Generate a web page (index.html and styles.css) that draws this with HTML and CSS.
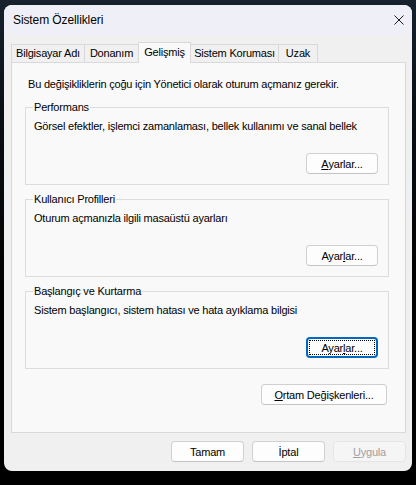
FILE: index.html
```html
<!DOCTYPE html>
<html lang="tr">
<head>
    <meta charset="UTF-8">
    <meta name="viewport" content="width=device-width, initial-scale=1.0">
    <title>Sistem Özellikleri</title>
    <link rel="stylesheet" href="styles.css">
</head>
<body>
    <div class="window">
        <div class="titlebar">
            <span class="title">Sistem Özellikleri</span>
            <svg class="close" width="10" height="10" viewBox="0 0 10 10">
                <path d="M0.5 0.5 L9.5 9.5 M9.5 0.5 L0.5 9.5" stroke="#1b1b1b" stroke-width="1" fill="none"/>
            </svg>
        </div>

        <div class="content">
            <div class="tabs">
                <div class="tab tab-name">Bilgisayar Adı</div>
                <div class="tab tab-hardware">Donanım</div>
                <div class="tab tab-advanced active">Gelişmiş</div>
                <div class="tab tab-protection">Sistem Koruması</div>
                <div class="tab tab-remote">Uzak</div>
            </div>

            <div class="panel">
                <p class="notice">Bu değişikliklerin çoğu için Yönetici olarak oturum açmanız gerekir.</p>

                <fieldset class="group">
                    <legend>Performans</legend>
                    <p class="desc">Görsel efektler, işlemci zamanlaması, bellek kullanımı ve sanal bellek</p>
                    <div class="group-actions">
                        <button class="btn"><u>A</u>yarlar...</button>
                    </div>
                </fieldset>

                <fieldset class="group">
                    <legend>Kullanıcı Profilleri</legend>
                    <p class="desc">Oturum açmanızla ilgili masaüstü ayarları</p>
                    <div class="group-actions">
                        <button class="btn">Ayar<u>l</u>ar...</button>
                    </div>
                </fieldset>

                <fieldset class="group last">
                    <legend>Başlangıç ve Kurtarma</legend>
                    <p class="desc">Sistem başlangıcı, sistem hatası ve hata ayıklama bilgisi</p>
                    <div class="group-actions">
                        <button class="btn focused"><span class="focus-ring">Ayar<u>l</u>ar...</span></button>
                    </div>
                </fieldset>

                <div class="panel-actions">
                    <button class="btn wide"><u>O</u>rtam Değişkenleri...</button>
                </div>
            </div>

            <div class="dialog-actions">
                <button class="btn">Tamam</button>
                <button class="btn">İptal</button>
                <button class="btn disabled"><u>U</u>ygula</button>
            </div>
        </div>
    </div>
</body>
</html>
```

FILE: styles.css
```css
* {
    margin: 0;
    padding: 0;
    box-sizing: border-box;
}

body {
    font-family: 'Liberation Sans', Arial, sans-serif;
    font-size: 11px;
    letter-spacing: -0.2px;
    line-height: 16px;
    color: #000;
    background: linear-gradient(180deg, #17222e 0%, #0b1118 20%, #000 60%);
    width: 416px;
    height: 485px;
    padding: 5px 4px 0 4px;
    overflow: hidden;
}

.window {
    width: 408px;
    height: 466px;
    background: #f0f0f0;
    border-radius: 8px;
    overflow: hidden;
    display: flex;
    flex-direction: column;
}

.titlebar {
    height: 30px;
    background: #eff0f7;
    display: flex;
    align-items: center;
    justify-content: space-between;
    padding: 0 8px 0 9px;
}

.title {
    font-size: 12px;
    letter-spacing: -0.1px;
}

.close {
    display: block;
}

.content {
    padding: 7px 6px 0 7px;
}

/* sekmeler */
.tabs {
    display: flex;
    align-items: flex-end;
    height: 20px;
    position: relative;
    z-index: 1;
}

.tab {
    height: 18px;
    line-height: 17px;
    text-align: center;
    white-space: nowrap;
    border: 1px solid #d9d9d9;
    border-bottom: none;
    border-left: none;
    background: #f0f0f0;
}

.tab:first-child {
    border-left: 1px solid #d9d9d9;
}

.tab-name { width: 74px; }
.tab-hardware { width: 54px; }
.tab-advanced { width: 53px; }
.tab-protection { width: 88px; }
.tab-remote { width: 39px; }

.tab.active {
    height: 21px;
    margin-bottom: -1px;
    margin-left: -1px;
    border-left: 1px solid #d9d9d9;
    background: #f9f9f9;
    line-height: 19px;
}

.panel {
    width: 395px;
    height: 371px;
    border: 1px solid #d9d9d9;
    background: #f9f9f9;
    padding: 13px 16px 0 13px;
}

.notice {
    padding-left: 3px;
    margin-bottom: 7px;
}

.group {
    min-width: 0;
    border: 1px solid #dcdcdc;
    padding: 3px 10px 10px 8px;
    margin-bottom: 6px;
}

.group.last {
    margin-bottom: 15px;
}

.group legend {
    padding: 0 1px;
    margin-left: -1px;
}

.desc {
    white-space: nowrap;
    margin-bottom: 19px;
}

.group-actions,
.panel-actions {
    display: flex;
    justify-content: flex-end;
}

.panel-actions {
    margin-right: 2px;
}

.btn {
    font-family: inherit;
    font-size: 11px;
    letter-spacing: -0.2px;
    color: #000;
    width: 72px;
    height: 21px;
    background: #fdfdfd;
    border: 1px solid #d0d0d0;
    border-bottom-color: #c4c4c4;
    border-radius: 4px;
    display: flex;
    align-items: center;
    justify-content: center;
}

.btn.wide {
    width: 126px;
}

.btn.focused {
    border: 2px solid #0067c0;
    padding: 1px;
}

.focus-ring {
    display: flex;
    align-items: center;
    justify-content: center;
    width: 100%;
    height: 100%;
    outline: 1px dotted #000;
    outline-offset: -1px;
}

.btn.disabled {
    color: #a0a0a0;
    background: #f5f5f5;
    border-color: #e5e5e5;
}

.dialog-actions {
    display: flex;
    justify-content: flex-end;
    gap: 8px;
    margin-top: 8px;
}

.dialog-actions .btn {
    width: 73px;
}
```
